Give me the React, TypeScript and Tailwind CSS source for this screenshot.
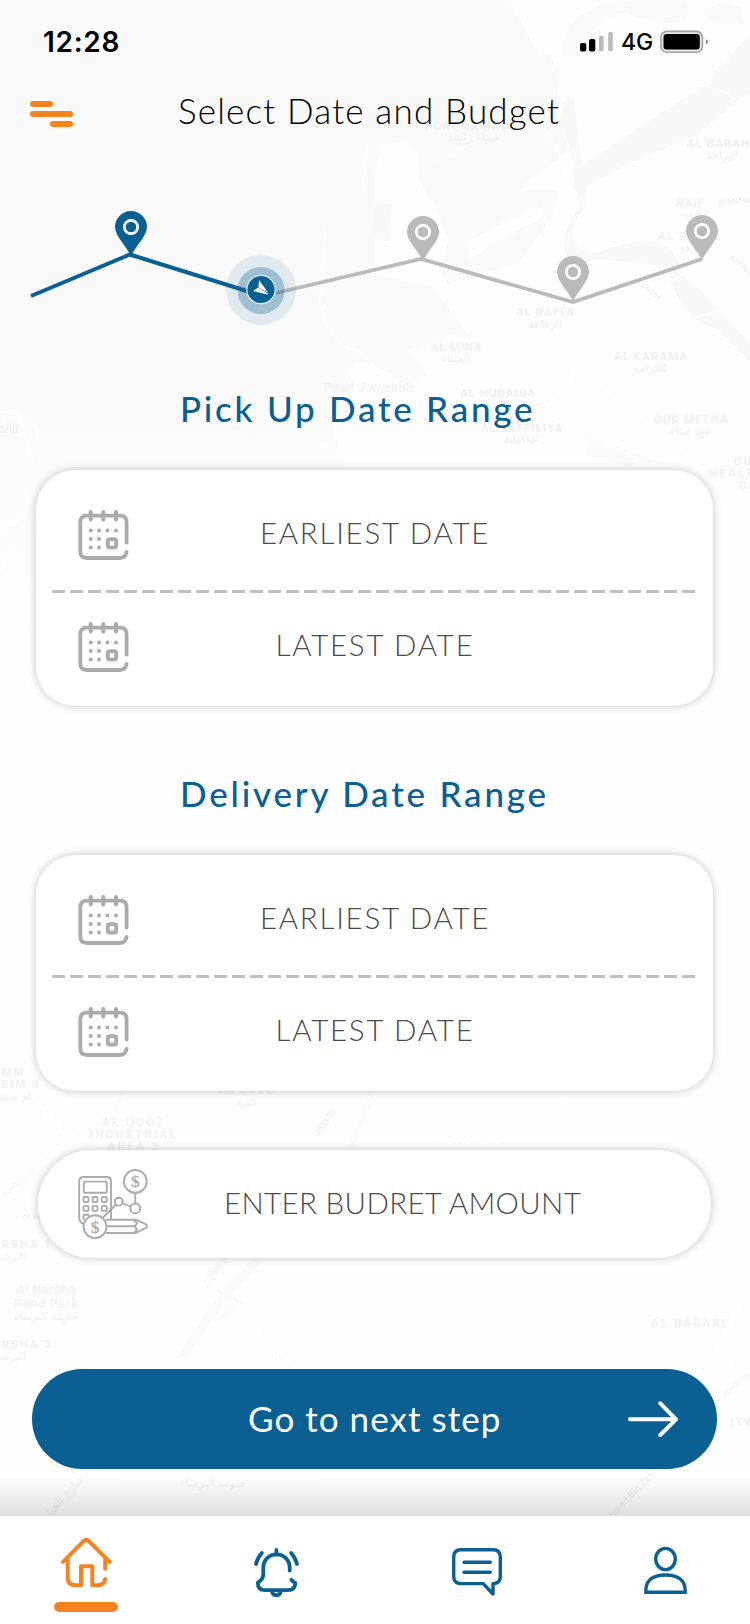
import React from "react";

type Label = { x: number; y: number; t: string; s?: number; r?: number; w?: number; sp?: number; c?: string; a?: "start" | "middle" };

const latinLabels: Label[] = [
  { x: 425, y: 130, t: "PORT RASHID", w: 700 },
  { x: 687, y: 147, t: "AL BARAHA", w: 700 },
  { x: 676, y: 207, t: "NAIF", w: 700, sp: 0.8 },
  { x: 718, y: 205, t: "Al Mateena", s: 8, sp: 0.2, r: -5 },
  { x: 658, y: 240, t: "AL RIGGA", w: 700, sp: 1.5 },
  { x: 729, y: 259, t: "Al Rigga", s: 8, sp: 0.2, r: 35 },
  { x: 516, y: 316, t: "AL RAFFA", w: 700 },
  { x: 431, y: 351, t: "AL MINA", w: 700, sp: 0.7 },
  { x: 614, y: 360, t: "AL KARAMA", w: 700 },
  { x: 460, y: 397, t: "AL HUDAIBA", w: 700 },
  { x: 481, y: 432, t: "AL JAFFILIYA", w: 700 },
  { x: 654, y: 423, t: "OUD METHA", w: 700 },
  { x: 734, y: 465, t: "DUBAI", sp: 2.2 },
  { x: 709, y: 477, t: "HEALTHCARE", sp: 2.2 },
  { x: 739, y: 489, t: "CITY", sp: 2.2 },
  { x: 641, y: 286, t: "3rd St", s: 8, sp: 0.2, r: 42 },
  { x: 324, y: 392, t: "Pearl Jumeirah", s: 13, sp: 0.15, w: 400 },
  { x: -10, y: 433, t: "alalia", s: 12, sp: 0, w: 400 },
  { x: -8, y: 1076, t: "UMM", sp: 2 },
  { x: -27, y: 1088, t: "SUQEIM 3", sp: 2 },
  { x: 219, y: 1094, t: "AL QUOZ", w: 700, sp: 1.2 },
  { x: 134, y: 1126, t: "AL QUOZ", sp: 2.4, a: "middle" },
  { x: 134, y: 1138, t: "INDUSTRIAL", sp: 2.4, a: "middle" },
  { x: 134, y: 1150, t: "AREA 3", sp: 2.4, a: "middle" },
  { x: 318, y: 1136, t: "26th St", s: 9, sp: 0.2, r: -54 },
  { x: 212, y: 1281, t: "26th St", s: 9, sp: 0.2, r: -54 },
  { x: 22, y: 1219, t: "Al Barsha", s: 8, sp: 0.2 },
  { x: -17, y: 1248, t: "BARSHA 1", w: 700, sp: 1.8 },
  { x: 46, y: 1294, t: "Al Barsha", s: 13.5, sp: 0.3, a: "middle", w: 400 },
  { x: 46, y: 1308, t: "Pond Park", s: 13.5, sp: 0.3, a: "middle", w: 400 },
  { x: -17, y: 1348, t: "BARSHA 3", w: 700, sp: 1.8 },
  { x: 651, y: 1327, t: "AL BARARI", sp: 2.1 },
  { x: 730, y: 1426, t: "ITY", w: 700, sp: 1.8 },
  { x: 608, y: 1523, t: "Ahmed Bin Zay", s: 9.5, sp: 0.2, r: -46 },
  { x: 435, y: 1147, t: "Google", s: 20, sp: 0, c: "#ffffff" },
];

const arabicLabels: Label[] = [
  { x: 473, y: 141, t: "ميناء راشد", s: 12 },
  { x: 722, y: 159, t: "البراحة", s: 11 },
  { x: 693, y: 217, t: "نايف" },
  { x: 691, y: 251, t: "الرقة" },
  { x: 545, y: 328, t: "الرفاعة", s: 11 },
  { x: 456, y: 362, t: "الميناء", s: 11 },
  { x: 650, y: 372, t: "الكرامة", s: 11 },
  { x: 521, y: 443, t: "الجافلية", s: 11 },
  { x: 691, y: 435, t: "عود ميثاء", s: 11 },
  { x: 7, y: 1100, t: "أم سقيم ٣", s: 11 },
  { x: 246, y: 1106, t: "القوز" },
  { x: 9, y: 1260, t: "البرشاء", s: 11 },
  { x: 46, y: 1320, t: "حديقة البرشاء", s: 11 },
  { x: 9, y: 1360, t: "البرشاء", s: 11 },
  { x: 213, y: 1487, t: "جنوب البرشاء", s: 11.5 },
  { x: 66, y: 1500, t: "شارع الخيل", s: 11.5, r: -48 },
];

function MapBackground() {
  return (
    <svg className="absolute inset-0" width="750" height="1624" viewBox="0 0 750 1624" aria-hidden="true">
      <defs>
        <linearGradient id="sea" x1="0" y1="0" x2="0" y2="1">
          <stop offset="0" stopColor="#f9f9f9" />
          <stop offset="0.45" stopColor="#f9f9f9" />
          <stop offset="1" stopColor="#fefefe" />
        </linearGradient>
      </defs>
      <rect width="750" height="1624" fill="#fdfdfd" />
      <rect y="700" width="750" height="360" fill="#fefefe" />
      <path d="M0 0H508L520 20L533 45L540 55H548L560 70L558 95L556 120L568 145L566 154L540 170L512 196L430 200L420 180L418 152L405 141L382 145L375 175V275L432 286L470 337L448 335L430 345L408 352L428 375L408 386L372 364L355 362L345 392L325 400L336 440L360 500L330 700H0Z" fill="url(#sea)" />
      <path d="M430 190H558L553 215L520 262L447 284L440 270L448 240Z" fill="#f9f9f9" />
      <path d="M467 242L536 205L545 215L470 258Z" fill="#fefefe" />
      <path d="M376 202L392 204L388 242L372 236Z" fill="#f7f7f7" />
      <path d="M563 55Q560 20 600 4L640 0H685Q692 12 683 22Q650 26 627 12Q600 14 578 50Q570 60 563 55Z" fill="#f9f9f9" />
      <path d="M703 12Q722 -2 740 8L744 24H718Q706 22 703 12Z" fill="#f9f9f9" />
      <path d="M566 96L574 98L582 166L660 114L712 82L714 70L726 62L750 34V92L694 136L632 162L586 186L588 206Q570 220 573 240Q584 256 602 251Q650 232 672 250L688 280L710 300L750 344V362L718 330L694 320Q676 300 664 268L640 262L596 260Q572 270 564 250Q562 230 580 206L574 180Q572 140 558 124Z" fill="#f8f8f8" />
      <path d="M584 435L622 448L660 462L625 465L585 455Z" fill="#fafafa" />
      <g fill="none" stroke="#ffffff" strokeWidth="1.5">
        <path d="M367 145L362 197M325 228L320 300Q322 330 345 345L375 365M436 164L466 146M535 125Q560 140 568 180M700 84L724 92L750 110M0 412Q32 408 38 438M530 430L600 340L750 220M480 390L750 300M430 360L640 460M580 370L720 480M0 1060L130 1210L280 1360M0 1190L120 1100L270 900M20 1204L10 1190M310 1380L215 1295L130 1225M700 1395L740 1300M120 1480H320M610 1516L660 1480" />
        <path d="M0 530L20 518M0 570L12 550M320 445Q350 455 375 440M0 420L20 415L35 470M560 1095L566 1118M680 1340L720 1370L745 1350" strokeWidth="3" />
      </g>
      <g fill="none" stroke="#fafafa">
        <path d="M182 1358L220 1300L262 1256" strokeWidth="9" />
        <path d="M375 1084L350 1150" strokeWidth="5" />
        <path d="M722 1396L750 1374" strokeWidth="7" />
        <path d="M206 1284L240 1302L218 1320M110 1120L125 1090" strokeWidth="5" />
        <path d="M0 1198L35 1170" strokeWidth="8" />
      </g>
      <g className="font-['Roboto','Noto_Sans',sans-serif]">
        {latinLabels.map((l, i) => (
          <text key={i} x={l.x} y={l.y} fontSize={l.s ?? 11.5} fontWeight={l.w ?? 500} letterSpacing={l.sp ?? 1} fill={l.c ?? "#efefef"} textAnchor={l.a ?? "start"} transform={l.r ? `rotate(${l.r} ${l.x} ${l.y})` : undefined}>
            {l.t}
          </text>
        ))}
      </g>
      <g className="font-['DejaVu_Sans',sans-serif]" fill="#efefef">
        {arabicLabels.map((l, i) => (
          <text key={i} x={l.x} y={l.y} fontSize={l.s ?? 10} textAnchor="middle" transform={l.r ? `rotate(${l.r} ${l.x} ${l.y})` : undefined}>
            {l.t}
          </text>
        ))}
      </g>
    </svg>
  );
}

function StatusBar() {
  return (
    <div className="flex h-[84px] items-center pl-[43px] pr-[42px] font-['Inter',sans-serif] text-black">
      <span className="text-[28px] font-semibold leading-none tracking-[0.7px]">12:28</span>
      <svg className="ml-auto" width="34" height="20" viewBox="0 0 34 20">
        <rect x="0" y="11" width="6.3" height="8.5" rx="1.8" />
        <rect x="9" y="7" width="6.3" height="12.5" rx="1.8" />
        <rect x="19" y="3.8" width="4.6" height="15.5" rx="1.5" fill="#bbb" />
        <rect x="28.2" y="0" width="4.6" height="19.3" rx="1.5" fill="#bbb" />
      </svg>
      <span className="ml-[7px] w-[39px] text-[23px] font-medium leading-none">4G</span>
      <svg width="48" height="24" viewBox="0 0 48 24">
        <rect x="0.9" y="1.4" width="41.5" height="20.8" rx="6" fill="#e8e8e8" stroke="#a3a3a3" strokeWidth="1.6" />
        <rect x="3.5" y="4" width="36.3" height="15.6" rx="3" />
        <path d="M46 9.3Q48 10 48 11.8Q48 13.6 46 14.3Z" fill="#888" />
      </svg>
    </div>
  );
}

function Header() {
  return (
    <header className="flex h-[60px] items-center pl-[30px]">
      <button aria-label="Menu" className="flex w-[43px] flex-col gap-1">
        <span className="h-1.5 w-[23px] rounded-full bg-[#f58420]" />
        <span className="h-1.5 w-[43px] rounded-full bg-[#f58420]" />
        <span className="h-1.5 w-[23px] self-end rounded-full bg-[#f58420]" />
      </button>
      <h1 className="ml-[105px] -mt-[7px] whitespace-nowrap text-[35px] font-light leading-none tracking-[1.17px] text-black">
        Select Date and Budget
      </h1>
    </header>
  );
}

function Pin({ x, y, color }: { x: number; y: number; color: string }) {
  return (
    <g transform={`translate(${x} ${y})`}>
      <path d="M0 29.5C-3 21-16 9.5-16 0A16 16 0 0 1 16 0C16 9.5 3 21 0 29.5Z" fill={color} />
      <circle r="6.7" fill="none" stroke="#fff" strokeWidth="2.7" />
    </g>
  );
}

function Stepper() {
  return (
    <svg className="block" width="750" height="160" viewBox="0 190 750 160">
      <path d="M276 293L421 259L573 302L702 259" fill="none" stroke="#bababa" strokeWidth="3.8" />
      <Pin x={131} y={227} color="#0a6092" />
      <Pin x={423} y={232} color="#bababa" />
      <Pin x={573} y={272} color="#bababa" />
      <Pin x={702} y={231} color="#bababa" />
      <circle cx="261" cy="290" r="35" fill="#0a6092" fillOpacity="0.1" />
      <circle cx="261" cy="290.5" r="23.5" fill="#0a6092" fillOpacity="0.31" />
      <path d="M31 296L130 254.5L250 292" fill="none" stroke="#0a6092" strokeWidth="4" />
      <circle cx="261" cy="289.5" r="14.2" fill="#0a6092" stroke="#e6eef3" strokeWidth="1.2" />
      <path d="M259 280L268 292.5L258.5 287.5ZM253.3 291L258 287.5L268 293.5L267.3 294.5Z" fill="#fff" />
    </svg>
  );
}

function CalendarIcon() {
  return (
    <svg width="51" height="51" viewBox="0 0 51 51" fill="none" stroke="#ababab" strokeWidth="3.8" strokeLinecap="round" strokeLinejoin="round">
      <path d="M48.6 32.5V12.5Q48.6 5.7 42 5.7H9Q2.3 5.7 2.3 12.5V41.5Q2.3 48 9 48H42Q47.6 48 48.6 41.8" />
      <path d="M12.7 2V9.6M25.3 2V9.6M38 2V9.6" strokeWidth="4" />
      <rect x="29.8" y="29.1" width="8.4" height="8.4" rx="2" />
      <g fill="#ababab" stroke="none">
        {[12.7, 21, 29.5, 38].map((x) => <circle key={x} cx={x} cy="20.4" r="2" />)}
        {[12.7, 21].map((x) => <circle key={x} cx={x} cy="29" r="2" />)}
        {[12.7, 21].map((x) => <circle key={x} cx={x} cy="37.5" r="2" />)}
      </g>
    </svg>
  );
}

function DateRow({ label }: { label: string }) {
  return (
    <button className="grid h-14 w-full grid-cols-[92px_1fr_92px] items-center">
      <span className="pl-[42px]"><CalendarIcon /></span>
      <span className="-mt-[5px] pl-[1px] text-center text-[29.5px] font-light leading-none tracking-[1.75px] text-[#4a4a4a]">{label}</span>
    </button>
  );
}

function DateCard() {
  return (
    <div className="ml-9 flex h-[236px] w-[677px] flex-col rounded-[39px] bg-white pt-[37px] shadow-[0_0_9px_rgba(0,0,0,0.24)]">
      <DateRow label="EARLIEST DATE" />
      <div className="ml-[15.5px] mt-[27px] mb-[26px] h-[3px] w-[643px] shrink-0 bg-[repeating-linear-gradient(90deg,#c0c0c0_0_13px,transparent_13px_18px)]" />
      <DateRow label="LATEST DATE" />
    </div>
  );
}

function BudgetIcon() {
  return (
    <svg width="71" height="72" viewBox="0 0 71 72" fill="none" stroke="#ababab" strokeWidth="1.9" strokeLinejoin="round">
      <path d="M6 56Q1.2 54.5 1.2 50V13.5Q1.2 9 5.7 9H28.5Q33 9 33 13.5V51" />
      <rect x="5.8" y="13.6" width="23" height="11.2" rx="1" />
      {[31.5, 40.4].map((y) => [8, 17, 26.2].map((x) => <rect key={`${x}-${y}`} x={x - 2.5} y={y - 2.5} width="5" height="5" rx="1" />))}
      <path d="M5.5 52V47.5Q5.5 46.8 6.5 46.8H10.5V48" />
      <path d="M25 49.5L38 36.5M44.5 35L52.5 38.5M57.3 25V35" />
      <circle cx="40.7" cy="33.7" r="3.9" />
      <circle cx="57.3" cy="40.4" r="4.9" />
      <path d="M27.5 51.7H58L68.5 56.7Q70 58.2 68.5 59.3L58 65H27.5M29 58.2H57M56 52L59 55.2L57 58.2L59 61.8L56 65" />
      <circle cx="57.3" cy="13.4" r="11.4" />
      <circle cx="17" cy="58.7" r="11.4" fill="#fff" />
      <g fill="#ababab" stroke="none" className="font-['Liberation_Serif',serif] font-bold" fontSize="17.5" textAnchor="middle">
        <text x="57.3" y="19.2">$</text>
        <text x="17" y="64.5">$</text>
      </g>
    </svg>
  );
}

function NavBar() {
  return (
    <nav className="mt-auto grid h-[108px] grid-cols-[172px_208px_193px_185px] bg-white text-[#0a6092]">
      <button aria-label="Home" className="flex flex-col items-center pt-[21px] text-[#f58420]">
        <svg width="51" height="51" viewBox="0 0 51 51" fill="none" stroke="currentColor" strokeWidth="4" strokeLinecap="round" strokeLinejoin="round">
          <path d="M2 24.8L22.6 4.2Q25.3 1.6 28 4.2L48.6 24.8" />
          <path d="M6.7 21V40.5Q6.7 48.2 14 48.2H20V29.3H31.3V48.2H37Q43 48.2 44.2 42M44.2 22V31.7" />
        </svg>
        <span className="mt-[14px] h-2.5 w-16 rounded-full bg-current" />
      </button>
      <button aria-label="Notifications" className="flex justify-center pt-[31px]">
        <svg width="47" height="52" viewBox="0 0 47 52" fill="none" stroke="currentColor" strokeWidth="3.8" strokeLinecap="round" strokeLinejoin="round">
          <path d="M23.4 3V7.5M36.7 23.5V20.5A13.2 13.2 0 0 0 10.3 20.5V27Q10.3 32.5 4.8 35.7Q4.8 43.2 12 43.2H35Q42 43.2 42.4 36Q40 35 38.4 32.8" />
          <path d="M19 44.5A4.4 4.4 0 0 0 27.7 44.5M8.8 6Q4.4 11 3 17M38.2 6Q42.6 11 44 17" />
        </svg>
      </button>
      <button aria-label="Messages" className="flex justify-center pt-[31px]">
        <svg width="50" height="50" viewBox="0 0 50 50" fill="none" stroke="currentColor" strokeWidth="3.4" strokeLinecap="round" strokeLinejoin="round">
          <path d="M9 2.7H41Q48.3 2.7 48.3 10V29.5Q48.3 36.6 41 36.6V47L31.2 36.6H9Q1.7 36.6 1.7 29.5V10Q1.7 2.7 9 2.7ZM12 15.2H38.3M12 25.2H38.3" />
        </svg>
      </button>
      <button aria-label="Profile" className="flex justify-center pt-[30px]">
        <svg width="43" height="49" viewBox="0 0 43 49" fill="none" stroke="currentColor" strokeWidth="3.4">
          <ellipse cx="21.5" cy="13" rx="9.8" ry="10.6" />
          <path d="M1.8 46.3Q1.2 29 21.5 29Q41.8 29 41.2 46.3Z" />
        </svg>
      </button>
    </nav>
  );
}

export default function App() {
  return (
    <main className="relative h-[1624px] w-[750px] overflow-hidden bg-white font-['Lato','Noto_Sans',sans-serif]">
      <MapBackground />
      <div className="relative flex h-full flex-col">
        <StatusBar />
        <Header />
        <div className="mt-[46px]"><Stepper /></div>
        <h2 className="mt-[41px] h-[79px] whitespace-nowrap pl-[180px] text-[35px] leading-none tracking-[2.75px] text-[#0a6092] font-medium">Pick Up Date Range</h2>
        <DateCard />
        <h2 className="mt-[70px] h-[79px] whitespace-nowrap pl-[180px] text-[35px] leading-none tracking-[2.8px] text-[#0a6092] font-medium">Delivery Date Range</h2>
        <DateCard />
        <button className="ml-[38px] mt-[59px] grid h-[108px] w-[673px] grid-cols-[111px_1fr_80px] items-center rounded-full bg-white shadow-[0_0_9px_rgba(0,0,0,0.24)]">
          <span className="pl-10"><BudgetIcon /></span>
          <span className="-mt-[2px] whitespace-nowrap pl-[75px] text-left text-[29.5px] font-light leading-none tracking-[0.35px] text-[#4a4a4a]">ENTER BUDRET AMOUNT</span>
        </button>
        <button className="ml-8 mt-[111px] flex h-[100px] w-[685px] items-center rounded-full bg-[#0a6092] pl-[216px] pr-[39px] text-white">
          <span className="-mt-0.5 whitespace-nowrap text-[35px] leading-none tracking-[1.03px]">Go to next step</span>
          <svg className="ml-auto" width="50" height="36" viewBox="0 0 50 36" fill="none" stroke="currentColor" strokeWidth="4" strokeLinecap="round" strokeLinejoin="round">
            <path d="M2 18.3H48M32.3 2.3L48 18.3L32.3 34" />
          </svg>
        </button>
        <div className="mt-2 h-[39px] bg-linear-to-b from-transparent to-black/12" />
        <NavBar />
      </div>
    </main>
  );
}
